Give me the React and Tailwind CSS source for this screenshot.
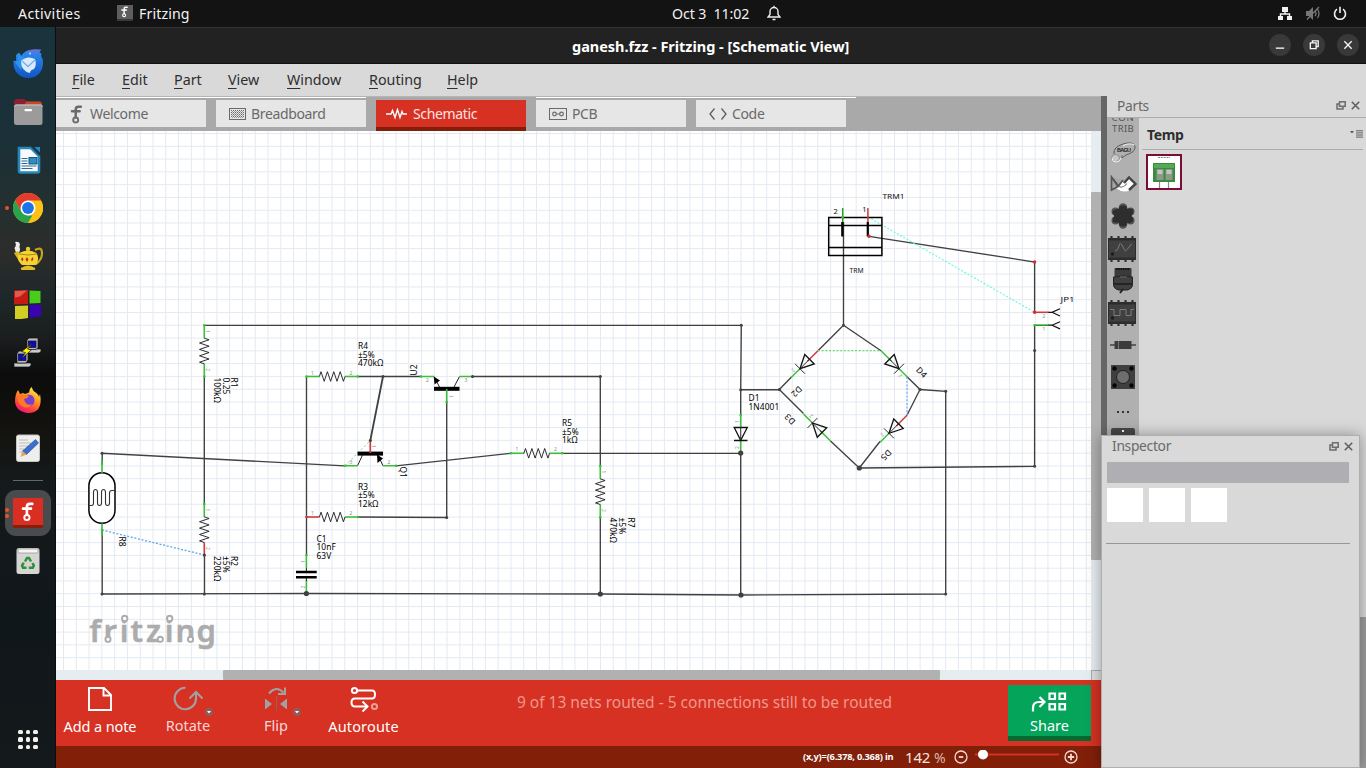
import React from "react";

const WIRE = "#404040";
const GREEN = "#3cbf3c";
const RED = "#cf3a3a";

function DockSlot({ children, dots = 0, active = false }) {
  return (
    <div className="relative flex h-12 w-full shrink-0 items-center justify-center">
      {dots > 0 && (
        <div className="absolute left-[5px] flex flex-col gap-[2px]">
          {Array.from({ length: dots }).map((_, i) => (
            <span key={i} className="block size-1 rounded-full bg-[#e95420]" />
          ))}
        </div>
      )}
      {active ? (
        <div className="flex size-[46px] items-center justify-center rounded-[11px] bg-[#494b4c]">{children}</div>
      ) : (
        children
      )}
    </div>
  );
}

function Ic({ children }) {
  return (
    <svg width="30" height="30" viewBox="0 0 30 30" className="block">
      {children}
    </svg>
  );
}

function FMark({ color = "#fff", x = 0, y = 0, s = 1 }) {
  return (
    <g transform={`translate(${x} ${y}) scale(${s})`} fill="none" stroke={color}>
      <path d="M10 2.2H7.6Q5 2.2 5 5v7.4M1.4 6.6h7.4" strokeWidth="2.4" strokeLinecap="round" />
      <circle cx="5" cy="14.8" r="2.4" strokeWidth="1.8" />
    </g>
  );
}

function Dock() {
  return (
    <aside className="flex w-14 shrink-0 flex-col items-center border-r border-[#0b0e0f] bg-[linear-gradient(180deg,#1a333c_0%,#1b3038_15%,#24302f_25%,#2c2d2b_30%,#1d2729_37%,#1b1d1e_42%,#0c0c0c_47%,#141310_55%,#151a1c_62%,#10171a_80%,#14191b_100%)] pt-[13px]">
      <DockSlot>
        <Ic>
          <defs>
            <linearGradient id="tb" x1="0" y1="0" x2="0" y2="1">
              <stop offset="0" stopColor="#2f8df0" />
              <stop offset="1" stopColor="#1255c4" />
            </linearGradient>
          </defs>
          <path d="M3 6L6 3.500 7.500 8Q10 3 15 1.500L21 .8H28L26.500 3.500 28.500 4.500 28 7Q31.500 12 29 20 25 29 15.500 29C5 29-1 20 .8 11L3 14z" fill="url(#tb)" />
          <path d="M1 12Q5 17 8 21L12 8Q7 8 7 4 4 6 5 12z" fill="#2a93ec" />
          <path d="M12 3.500C15 .5 22-.5 28 .8L24 5Q19 1.500 12 3.500z" fill="#6b6fd8" />
          <circle cx="17" cy="4.500" r=".9" fill="#dbe9ff" />
          <path d="M8 12Q14 6 22 10 24 16 21 20 17 21 17 24 8 22 8 12Z" fill="#d9eafc" />
          <path d="M9 12l6 5.500L22 11" fill="none" stroke="#73aef0" strokeWidth="1.300" />
        </Ic>
      </DockSlot>
      <DockSlot>
        <Ic>
          <path d="M1 5q0-3 3-3h7l3 2.500h12q3 0 3 3v5H1z" fill="#8a1f33" />
          <path d="M13 4.500h13q3 0 3 3v5H10z" fill="#c44a26" />
          <rect x="1" y="7.500" width="28.500" height="20.500" rx="2.500" fill="#9b9b9b" />
          <path d="M1.500 9.500q0-1.500 2-1.500h24q2 0 2 1.500" stroke="#c6c6c6" fill="none" />
          <rect x="11.500" y="12" width="7.500" height="2.200" rx=".8" fill="#fff" />
        </Ic>
      </DockSlot>
      <DockSlot>
        <Ic>
          <path d="M6 3h12l8 8v15q0 1.500-1.500 1.500h-17Q6 27.500 6 26z" fill="#f6fafc" stroke="#2a86b8" strokeWidth="2.600" />
          <path d="M18 2l8.500 9V2z" fill="#163b52" />
          <path d="M21.500 2H27v5.500z" fill="#2689c0" />
          <path d="M8.500 13.500h6M8.500 16h6M8.500 18.500h6M8.500 21h15M8.500 23.500h11" stroke="#2a6d95" />
          <rect x="16" y="12.500" width="8" height="6.500" fill="#2c8cc4" stroke="#1c5473" />
        </Ic>
      </DockSlot>
      <DockSlot dots={1}>
        <Ic>
          <circle cx="15" cy="15" r="15" fill="#fbc116" />
          <path d="M28 7.500H15L8.500 18.700 2 7.500A15 15 0 0 1 28 7.500z" fill="#e33b2e" />
          <path d="M2 7.500L8.500 18.700 15 22.500h6.400L15 30A15 15 0 0 1 2 7.500z" fill="#2ba24c" />
          <path d="M15 30l6.500-11.200L28 7.500A15 15 0 0 1 15 30z" fill="#fbc116" />
          <circle cx="15" cy="15" r="7.500" fill="#fff" />
          <circle cx="15" cy="15" r="5.900" fill="#1a73e8" />
        </Ic>
      </DockSlot>
      <DockSlot>
        <Ic>
          <path d="M2 1q4-1 5 2-1 3 0 5 0 4-3 5Q2 10 1.500 7 4 4 2 1z" fill="#ececec" />
          <path d="M22 9q7-4 7 3t-6 11" fill="none" stroke="#c6a51a" strokeWidth="2.200" />
          <path d="M1 12l4-2 3 6-2 4z" fill="#d9b71e" />
          <path d="M6 12Q15 7 23.500 12 27 18 23 24H9Q3 19 6 12z" fill="#f2d531" />
          <path d="M6 13Q15 15 24 13" stroke="#ab8610" fill="none" />
          <path d="M8 27q7-5 14 0 1 2-2 2H10q-3 0-2-2z" fill="#e4bd22" />
          <circle cx="15" cy="8" r="2.200" fill="#e9c934" />
          <path d="M9 16l1.500 2L9.500 20.500 8 18.500zM14 16l1.500 2.500-1.500 2.500-1.500-2.500zM19.500 16l1 2-1.500 2.500-1-2z" fill="#d02a20" />
        </Ic>
      </DockSlot>
      <DockSlot>
        <Ic>
          <path d="M1 1.500L15 1V15L1 15.500z" fill="#c41c12" />
          <path d="M2 2l12-.5-7 6-5 1z" fill="#e8776d" opacity=".7" />
          <path d="M16.500 1.500L27.500 2V14l-11 .5z" fill="#4ccc1a" />
          <path d="M2 17l13-.5V29L2 31z" fill="#d2ce24" />
          <path d="M16.500 16L28 15.500V27l-11.500 2z" fill="#3903b4" />
        </Ic>
      </DockSlot>
      <DockSlot>
        <Ic>
          <g stroke="#111" strokeWidth=".7">
            <path d="M14 12h14v2.500l-2 1.500H13z" fill="#c9c9c9" />
            <path d="M14 3L16 1H25v9.500l-2 2H14z" fill="#b9b9b9" />
            <rect x="15.500" y="4" width="7.500" height="6.500" fill="#0a0ac8" />
            <path d="M1 26h17v2.500l-2 1.500H1z" fill="#c9c9c9" />
            <path d="M4 16.500L6 14h9v9l-2 3H4z" fill="#b9b9b9" />
            <rect x="5.500" y="17" width="7.500" height="6.500" fill="#0a0ac8" />
            <path d="M20 6l-5.500 6 4 .8L8 22l4.500-6.500-4-1z" fill="#fcf400" />
          </g>
        </Ic>
      </DockSlot>
      <DockSlot>
        <Ic>
          <defs>
            <linearGradient id="ff" x1=".8" y1="0" x2=".3" y2="1">
              <stop offset="0" stopColor="#fff44f" />
              <stop offset=".4" stopColor="#ff9a22" />
              <stop offset=".8" stopColor="#ff3647" />
              <stop offset="1" stopColor="#e31587" />
            </linearGradient>
          </defs>
          <path d="M5 5l2 4 3-1 2 1 4-1.500Q16 4 18.500 2l2 4q5 3 5.500 6l1-3Q29 19 25 24.500 19 29.500 12 27.500 3 25.500 2 17 2 9 5 5z" fill="url(#ff)" />
          <circle cx="15.500" cy="15.500" r="6" fill="#7440d0" />
          <path d="M5 10q4-2 7 0l4 .5q-1 3-5 3.500l1 3q2 4 7 2-4 6-10 2T5 10z" fill="#ff7a24" />
        </Ic>
      </DockSlot>
      <DockSlot>
        <Ic>
          <rect x="3.500" y="2" width="23" height="26.500" rx="2" fill="#eeeeec" stroke="#c4c4c0" />
          <path d="M6 7h9M6 10h12M6 13h9M6 16h5M6 19h4" stroke="#bdbdb8" />
          <path d="M22.500 6.500l3 3.500-12 11.500-4-3.500z" fill="#3a6fd0" stroke="#204a8c" strokeWidth=".6" />
          <path d="M9.500 18l4 3.500L7.500 24z" fill="#e7a15d" />
        </Ic>
      </DockSlot>
      <div className="flex h-[17px] items-center">
        <div className="h-px w-[30px] bg-[#63686a]" />
      </div>
      <DockSlot dots={2} active>
        <Ic>
          <rect width="30" height="30" fill="#d92f22" />
          <rect y="27" width="30" height="3" fill="#861e0c" />
          <FMark x={8.500} y={3.500} s={1.080} />
        </Ic>
      </DockSlot>
      <DockSlot>
        <Ic>
          <rect x="3.500" y="2" width="23" height="26" rx="2.500" fill="#d5d5d3" />
          <rect x="5" y="3" width="20" height="4" rx="1" fill="#f6f6f6" stroke="#8c8c8c" strokeWidth=".7" />
          <g fill="none" stroke="#2e9235" strokeWidth="2.500">
            <path d="M12 15.500l2-3.500h2l2 3.500" />
            <path d="M19.500 17l1.300 2.500-1 2.200h-4" />
            <path d="M13.500 21.700h-3.500L9 19.500l1.800-2.800" />
          </g>
        </Ic>
      </DockSlot>
      <div className="mt-auto mb-[19px] ml-px grid grid-cols-3 gap-[3px]">
        {Array.from({ length: 9 }).map((_, i) => (
          <span key={i} className="size-[4.500px] rounded-[1.500px] bg-[#f0f0ec]" />
        ))}
      </div>
    </aside>
  );
}

const zigH = (x, y) => `M${x} ${y}l1.600-4.800 3.200 9.600 3.200-9.600 3.200 9.600 3.200-9.600 3.200 9.600 3.200-9.600 3.200 9.600 1.600-4.800`;

function Resistor({ x, y, vertical, a = GREEN, b = GREEN }) {
  return (
    <g transform={`translate(${x} ${y})${vertical ? " rotate(90)" : ""}`}>
      <path d="M0 0H13" stroke={a} strokeWidth="1.600" />
      <path d="M38.500 0H51.200" stroke={b} strokeWidth="1.600" />
      <path d={zigH(12.900, 0)} fill="none" stroke="#1a1a1a" strokeWidth=".9" />
      <circle cx="0" cy="0" r="1.300" fill={a} />
      <circle cx="51.200" cy="0" r="1.300" fill={b} />
      <text x="4.500" y="-2" fontSize="5" fill="#8c8c8c">1</text>
      <text x="43" y="-2" fontSize="5" fill="#8c8c8c">2</text>
    </g>
  );
}

function Label({ x, y, lines, rot = 0 }) {
  return (
    <g transform={`translate(${x} ${y}) rotate(${rot})`} fill="#000" fontSize="8.400" letterSpacing="0.08">
      {lines.map((t, i) => (
        <text key={t} x="0" y={i * 8.700}>
          {t}
        </text>
      ))}
    </g>
  );
}

function Dots({ pts, r = 1.500, fill = WIRE }) {
  return pts.map(([x, y]) => <circle key={`${x}-${y}`} cx={x} cy={y} r={r} fill={fill} />);
}

function Diode({ x1, y1, rot, first = GREEN }) {
  return (
    <g transform={`translate(${x1} ${y1}) rotate(${rot})`}>
      <path d="M0 0H15" stroke={first} strokeWidth="1.500" />
      <path d="M25.500 0H38" stroke={GREEN} strokeWidth="1.500" />
      <path d="M12 -6.700V6.700L25.500 0Z" fill="none" stroke="#111" strokeWidth="1.300" />
      <path d="M25.500 -7V7M12 0H25.500" stroke="#222" strokeWidth=".9" />
      <text x="30" y="5.500" fontSize="5" fill="#8c8c8c">2</text>
    </g>
  );
}

function Schematic() {
  return (
    <svg width="1035" height="539" viewBox="56 131 1035 539" className="block" fontFamily="'Noto Sans', sans-serif">
      <defs>
        <pattern id="grid" x="63" y="133" width="12.785" height="12.785" patternUnits="userSpaceOnUse">
          <path d="M0 .5H12.785M.5 0V12.785" stroke="#e4e9f1" strokeWidth="1" />
        </pattern>
      </defs>
      <rect x="56" y="131" width="1035" height="539" fill="#fff" />
      <rect x="56" y="131" width="1035" height="539" fill="url(#grid)" />

      <text x="89.500 103.500 119.800 130.500 146 164.800 175.500 196.500" y="641.700" fontSize="31" fontWeight="600" fill="#acacac" stroke="#acacac" strokeWidth=".5">
        fritzing
      </text>
      <g fill="#fff" stroke="#acacac" strokeWidth="1.900">
        <circle cx="124.700" cy="618.500" r="2.700" />
        <circle cx="169.700" cy="618.500" r="2.700" />
        <circle cx="108" cy="639.300" r="2.600" />
        <circle cx="160.300" cy="639.300" r="2.600" />
        <circle cx="190.500" cy="639.300" r="2.600" />
      </g>

      <g fill="none" stroke={WIRE} strokeWidth="1.350">
        <path d="M204.300 325.300H741.300L740.700 389.700H779.500" />
        <path d="M204.300 376.500V504M204.500 555V594" />
        <path d="M102.200 465V453.300L345 465.800" />
        <path d="M102.200 530V594L306.500 593.500 600.300 594 741 595 945.700 594V391.300L920 389.500" />
        <path d="M306.500 376.500V555M358 376.500H421M472.500 376.500H600.300V466M600.300 517V594" />
        <path d="M446.700 402V517.500L358 517M396 465.800L511 453.300M562 453.300H740.700" />
        <path d="M740.700 389.700V415M740.700 453V595" />
        <path d="M383 376.500L370.300 440.500" strokeWidth="1.800" />
        <path d="M843.500 222V325.300L818 350.700M843.500 325.300L881 350.700M907 376.800L920 389.500 907 415.300M880 441.500L859.300 468 830.500 441M791.500 377L779.300 389.500 803.500 413.500" />
        <path d="M859.300 468L1034.600 466.300V325.300M869 236.300L1034.600 262V312.300" />
      </g>

      <g fill="none" strokeWidth="1.200">
        <path d="M102 530L204.300 555" stroke="#5aa4ee" strokeDasharray="2 1.700" strokeWidth="1.300" />
        <path d="M345 465.800L370.300 440.500" stroke="#5ccf5c" strokeDasharray="2 2.500" strokeWidth=".9" />
        <path d="M818 350.700H881" stroke="#6fdf6f" strokeDasharray="2 1.700" />
        <path d="M907 377V415" stroke="#7fb8f8" strokeDasharray="2 1.700" strokeWidth="1.500" />
        <path d="M868 217L1034.600 312.300" stroke="#6df8dd" strokeDasharray="2 1.700" />
      </g>

      <Resistor x={204.300} y={325.300} vertical />
      <Resistor x={204.300} y={504} vertical b={RED} />
      <Resistor x={306.500} y={376.500} />
      <Resistor x={306.500} y={517} a={RED} />
      <Resistor x={511} y={453.300} />
      <Resistor x={600.300} y={466} vertical />

      {/* photoresistor */}
      <rect x="88.900" y="472.800" width="26.100" height="50.500" rx="13" fill="#fff" stroke="#000" strokeWidth="1.500" />
      <path d="M89 505.500H91.500Q93.500 505.500 93.500 503V492.500Q93.500 489.500 95.500 489.500T97.500 492.500V503Q97.500 505.500 99.500 505.500T101.500 503V492.500Q101.500 489.500 103.500 489.500T105.500 492.500V503Q105.500 505.500 107.500 505.500T109.500 503V493Q109.500 490.500 112 490.500H115" fill="none" stroke="#333" strokeWidth="1.100" />
      <path d="M102 460V473M102 523.500V536" stroke={GREEN} strokeWidth="1.600" />

      {/* transistors */}
      <g>
        <rect x="434" y="386.800" width="25.500" height="4" fill="#000" />
        <path d="M434 376.500L439.500 387M459.500 376.500L454 387" stroke="#222" />
        <path d="M433.700 376.500L440 380.500 434.500 384.500Z" fill="#000" />
        <path d="M421 376.500H434M460 376.500H472.500M446.700 389V402" stroke={GREEN} strokeWidth="1.600" />
        <rect x="357.500" y="451.600" width="25.500" height="4" fill="#000" />
        <path d="M357.500 465.800L362.500 455M383 465.800L378 455" stroke="#222" />
        <path d="M377 454.500L383 458.500 377.500 463Z" fill="#000" />
        <path d="M345 465.800H357.500M383 465.800H396" stroke={GREEN} strokeWidth="1.600" />
        <path d="M370.300 440.500V453" stroke={RED} strokeWidth="1.700" />
      </g>

      {/* capacitor */}
      <path d="M306.400 555V568M306.400 580V593" stroke={GREEN} strokeWidth="1.600" />
      <path d="M306.400 568V571M306.400 578V581" stroke="#222" />
      <path d="M296 572H316.700M296 577.200H316.700" stroke="#000" strokeWidth="2.400" />

      {/* diodes */}
      <g>
        <path d="M740.700 415V427.500M740.700 440.500V453" stroke={GREEN} strokeWidth="1.600" />
        <path d="M734.200 427.500H747.300L740.700 440.300ZM734 440.500H747.500" fill="none" stroke="#111" strokeWidth="1.300" />
        <path d="M740.700 427V440" stroke="#333" />
      </g>
      <Diode x1={818} y1={350.700} rot={135} first={RED} />
      <Diode x1={881} y1={350.700} rot={45} />
      <Diode x1={830.500} y1={441} rot={225} />
      <Diode x1={907} y1={415.300} rot={135} first={RED} />

      {/* screw terminal */}
      <g fill="none" stroke="#000" strokeWidth="1.500">
        <rect x="828.700" y="217.500" width="53.200" height="38" />
        <path d="M828.700 225.500H882M828.700 247.500H882" />
        <path d="M842.300 222V236.500M867.800 222V236.500" strokeWidth="2.200" />
        <path d="M842.700 208V222" stroke="#22a022" />
        <path d="M867.900 208V222" stroke={RED} />
      </g>

      {/* header */}
      <g fill="none" stroke="#111" strokeWidth="1.200">
        <path d="M1048 312.300H1052L1060 308.700M1052 312.300L1060 316M1048 325.200H1052L1060 321.700M1052 325.200L1060 328.900" />
        <path d="M1034.600 312.300H1048.500" stroke={RED} strokeWidth="1.600" />
        <path d="M1034.600 325.200H1048.500" stroke="#22a022" strokeWidth="1.600" />
      </g>

      <Dots pts={[[102, 453.300], [102, 594], [204.300, 594], [383, 376.500], [472.500, 376.500], [370.300, 440.500], [741.300, 325.300], [600.300, 376.500], [446.700, 517.500], [843.500, 325.300], [779.300, 389.500], [740.700, 389.700], [920, 389.500], [945.700, 391.300], [945.700, 594], [1034.600, 350.500], [1034.600, 466.300], [204.300, 555]]} r={1.500} />
      <Dots pts={[[306.400, 593.500], [600.300, 594], [741, 595], [859.300, 468], [740.700, 453]]} r={2.600} />
      <Dots pts={[[869, 236.300], [1034.600, 262], [1034.600, 312.300]]} r={1.700} fill="#e02828" />
      <Dots pts={[[345, 465.800], [396, 465.800], [421, 376.500], [446.700, 402], [842.700, 217], [1034.600, 325.200], [102, 530], [306.400, 555], [740.700, 415]]} r={1.300} fill={GREEN} />

      <Label x={358} y={349} lines={["R4", "±5%", "470kΩ"]} />
      <Label x={358} y={489.500} lines={["R3", "±5%", "12kΩ"]} />
      <Label x={316.500} y={541.500} lines={["C1", "10nF", "63V"]} />
      <Label x={562} y={426} lines={["R5", "±5%", "1kΩ"]} />
      <Label x={748.500} y={401} lines={["D1", "1N4001"]} />
      <Label x={231.300} y={377.500} rot={90} lines={["R1", "0.25", "100kΩ"]} />
      <Label x={231.300} y={556} rot={90} lines={["R2", "±5%", "220kΩ"]} />
      <Label x={627.500} y={517.500} rot={90} lines={["R7", "±5%", "470kΩ"]} />
      <Label x={118.800} y={536.500} rot={90} lines={["R8"]} />
      <Label x={399.800} y={466.500} rot={90} lines={["Q1"]} />
      <Label x={417.300} y={375.500} rot={-90} lines={["U2"]} />
      <Label x={798.500} y={385.500} rot={135} lines={["D2"]} />
      <Label x={888} y={449} rot={135} lines={["D5"]} />
      <Label x={796} y={421} rot={225} lines={["D3"]} />
      <Label x={915.500} y={370.500} rot={45} lines={["D4"]} />

      <g fill="#111" fontSize="7.500">
        <text x="882.500" y="199" textLength="22" lengthAdjust="spacingAndGlyphs">TRM1</text>
        <text x="849.500" y="273" fontSize="6.800" textLength="14" lengthAdjust="spacingAndGlyphs">TRM</text>
        <text x="1060.500" y="302" textLength="14" lengthAdjust="spacingAndGlyphs">JP1</text>
        <text x="833.500" y="213.500">2</text>
        <text x="862.300" y="212">1</text>
      </g>
      <g fill="#8c8c8c" fontSize="5">
        <text x="426" y="382">2</text>
        <text x="464.500" y="382">3</text>
        <text x="349.500" y="464">3</text>
        <text x="387.500" y="464">2</text>
        <text x="1042.500" y="318">2</text>
        <text x="1042.500" y="331">1</text>
        <text transform="translate(448.500 395) rotate(90)">1</text>
        <text transform="translate(372 445) rotate(90)">1</text>
        <text transform="translate(304.500 563) rotate(-90)">1</text>
        <text transform="translate(304.500 588.500) rotate(-90)">2</text>
        <text transform="translate(739 423) rotate(-90)">1</text>
        <text transform="translate(739 449) rotate(-90)">2</text>
      </g>
    </svg>
  );
}

const MENUS = [
  ["File", "w-[50px]"],
  ["Edit", "w-[52px]"],
  ["Part", "w-[54px]"],
  ["View", "w-[59px]"],
  ["Window", "w-[82px]"],
  ["Routing", "w-[78px]"],
  ["Help", "w-[50px]"],
];

function Tab({ label, icon, active }) {
  return (
    <div className={active ? "flex h-[34px] w-[150px] flex-col pt-[3px]" : "flex h-[34px] w-[150px] flex-col border-t border-white pt-[2px]"}>
      <div className={active ? "flex h-[27px] items-center gap-[5px] bg-[#d63123] pl-[9px] text-[#fbe4e0]" : "flex h-[27px] items-center gap-[5px] bg-[#e6e6e6] pl-[13px] text-[#6a6a6a]"}>
        {icon}
        <span className="text-[14px] leading-none tracking-[-0.35px]">{label}</span>
      </div>
      {active && <div className="h-1 bg-[#811f09]" />}
    </div>
  );
}

function TabGap() {
  return <div className="h-px w-[10px] bg-white" />;
}

function Tabs() {
  return (
    <div className="flex h-[34px] bg-[#a9a9a9]">
      <Tab
        label="Welcome"
        icon={
          <svg width="16" height="20" viewBox="0 0 16 20">
            <FMark x={1.500} y={0.500} color="#6a6a6a" s={1.040} />
          </svg>
        }
      />
      <TabGap />
      <Tab
        label="Breadboard"
        icon={
          <svg width="17" height="12" viewBox="0 0 17 12" fill="none" stroke="#6a6a6a" shapeRendering="crispEdges">
            <rect x=".5" y=".5" width="16" height="11" />
            <path d="M2 2.500h13M2 4.500h13M2 6.500h13M2 8.500h13" strokeDasharray="1 1" strokeWidth="1" />
            <path d="M3 3.500h11M3 5.500h11M3 7.500h11M3 9.500h11" stroke="#9a9a9a" strokeDasharray="1 1" strokeWidth="1" />
          </svg>
        }
      />
      <div className="w-[10px]" />
      <Tab
        active
        label="Schematic"
        icon={
          <svg width="23" height="12" viewBox="0 0 23 12" fill="none" stroke="#fff" strokeWidth="1.400">
            <path d="M1 6h5l1.500-3.500 2.500 7 2.500-8 2.500 8 2-6L18 6h4" />
          </svg>
        }
      />
      <div className="w-[10px]" />
      <Tab
        label="PCB"
        icon={
          <svg width="18" height="12" viewBox="0 0 18 12" fill="none" stroke="#6a6a6a">
            <rect x=".5" y=".5" width="17" height="11" />
            <circle cx="5.500" cy="6" r="1.800" strokeWidth="1.200" />
            <circle cx="12.500" cy="6" r="1.800" strokeWidth="1.200" />
            <path d="M7.300 6h3.400" />
          </svg>
        }
      />
      <TabGap />
      <Tab
        label="Code"
        icon={
          <svg width="18" height="14" viewBox="0 0 18 14" fill="none" stroke="#5e5e5e" strokeWidth="1.300">
            <path d="M5.500 1.500L1 7l4.500 5.500M12.500 1.500L17 7l-4.500 5.500" />
          </svg>
        }
      />
      <TabGap />
    </div>
  );
}

function Caret() {
  return (
    <svg width="8" height="8" viewBox="0 0 8 8" className="absolute right-0 bottom-0">
      <circle cx="4" cy="4" r="4" fill="#8f5b5b" />
      <path d="M2 3h4L4 5.500z" fill="#fff" />
    </svg>
  );
}

function Toolbar() {
  return (
    <div className="flex h-[66px] bg-[#d63123] font-['Noto_Sans',sans-serif] text-[14.500px] text-white">
      <div className="flex w-[88px] flex-col items-center pt-[6px]">
        <svg width="26" height="26" viewBox="0 0 26 26" fill="none" stroke="#fff" strokeWidth="1.900">
          <path d="M2 2H17L24 9V24H2ZM16.500 2V9.500H24" />
        </svg>
        <span className="mt-[5px] leading-[18px] tracking-[-0.1px]">Add a note</span>
      </div>
      <div className="flex w-[88px] flex-col items-center pt-[5px] text-[#f7d5d9]">
        <div className="relative flex h-[31px] w-[50px] justify-center pt-[1px]">
          <svg width="30" height="26" viewBox="0 0 30 26" fill="none" stroke="#a1a1a1" strokeWidth="2.100" className="mr-px">
            <path d="M12.500 1.800A10.700 10.700 0 1 0 23 12V6" />
            <path d="M16.500 12.500L23 6l6.500 6.500" />
          </svg>
          <Caret />
        </div>
        <span className="leading-[18px]">Rotate</span>
      </div>
      <div className="flex w-[88px] flex-col items-center pt-[5px] text-[#f7d5d9]">
        <div className="relative flex h-[31px] w-[50px] justify-center pt-[1px]">
          <svg width="24" height="26" viewBox="0 0 24 26" fill="none" stroke="#a1a1a1" strokeWidth="2">
            <path d="M5 7.500Q12-1 19.500 6.500M21 1.500V8h-7" />
            <path d="M1 12.500L8 18 1 23.500ZM23 12.500L16 18 23 23.500Z" fill="#a1a1a1" stroke="none" />
            <path d="M12.500 10V25" stroke="#a05a55" strokeWidth="1.200" />
          </svg>
          <Caret />
        </div>
        <span className="leading-[18px]">Flip</span>
      </div>
      <div className="flex w-[88px] flex-col items-center pt-[6px] pr-px">
        <svg width="28" height="26" viewBox="0 0 28 26" fill="none" stroke="#fff" strokeWidth="2">
          <circle cx="4.500" cy="4.500" r="2.600" />
          <path d="M7.200 4.500H22q3 0 3 4t-3 4H5q-3.500 0-3.500 4T5 20.500H16.500M12.500 15.500l5 5-5 5" />
          <circle cx="24.500" cy="20.500" r="2.600" stroke="#f0a090" />
        </svg>
        <span className="mt-[5px] leading-[18px] tracking-[0.15px]">Autoroute</span>
      </div>
      <div className="flex flex-1 justify-center pt-[13px] pr-[7px] text-[#f0988a]">
        <span className="text-[15.500px] leading-[18px] whitespace-nowrap">9 of 13 nets routed - 5 connections still to be routed</span>
      </div>
      <div className="mt-[5px] mr-[10px] flex h-[56px] w-[83px] flex-col items-center border-b-[5px] border-[#06692f] bg-[#05a45b] pt-[7px]">
        <svg width="36" height="20" viewBox="0 0 36 20" fill="none" stroke="#fff" strokeWidth="2.200" className="mr-[1px]">
          <path d="M2 19.500V16q0-6 6-6h5M8.500 5l5 5-5 5" />
          <path d="M18.500 1.500h5.500V7h-5.500zM28.500 1.500H34V7h-5.500zM18.500 12h5.500v5.500h-5.500zM28.500 12H34v5.500h-5.500z" />
        </svg>
        <span className="mt-[4px] leading-[18px]">Share</span>
      </div>
    </div>
  );
}

function StatusBar() {
  return (
    <div className="flex h-[22px] items-center bg-[#811f09] text-white">
      <span className="ml-[747px] w-[102px] text-[9.300px] font-bold tracking-[-0.22px] whitespace-nowrap">(x,y)=(6.378, 0.368) in</span>
      <span className="w-[29px] text-[15px] tracking-[-0.2px] text-[#f5e4dd]">142</span>
      <span className="w-5 text-[14px] text-[#dcb6a6]">%</span>
      <svg width="14" height="14" viewBox="0 0 14 14" fill="none" stroke="#f3dcd5" strokeWidth="1.300">
        <circle cx="7" cy="7" r="6" />
        <path d="M4.800 7h4.400" strokeWidth="1.800" />
      </svg>
      <div className="ml-[7px] flex h-[11px] w-[84px] items-center pb-[4px]">
        <svg width="84" height="11" viewBox="0 0 84 11" className="block shrink-0">
          <path d="M0 4.500H84" stroke="#d63123" strokeWidth="2" />
          <circle cx="8" cy="4.500" r="5" fill="#fff" />
        </svg>
      </div>
      <svg width="14" height="14" viewBox="0 0 14 14" fill="none" stroke="#f3dcd5" strokeWidth="1.300" className="ml-[5px]">
        <circle cx="7" cy="7" r="6" />
        <path d="M3.800 7h6.400M7 3.800v6.400" strokeWidth="1.800" />
      </svg>
    </div>
  );
}

function PanelButtons() {
  return (
    <div className="flex items-center gap-[5px]">
      <svg width="10" height="9" viewBox="0 0 10 9" fill="none" stroke="#6b6b6b" strokeWidth="1.500">
        <rect x="3.500" y=".8" width="5.700" height="4.500" />
        <path d="M3 3H1v5h6V6" />
      </svg>
      <svg width="9" height="9" viewBox="0 0 9 9" fill="none" stroke="#606060" strokeWidth="1.600">
        <path d="M.8 .8l7.400 7.400M8.200 .8L.8 8.200" />
      </svg>
    </div>
  );
}

function Chip({ wave }) {
  return (
    <svg width="28" height="26" viewBox="0 0 28 26" className="mr-[2px]">
      <path d="M3.500 0v26M10.500 0v26M17.500 0v26M24.500 0v26" stroke="#333" strokeWidth="2.200" />
      <rect x="0" y="2" width="28" height="22" fill="#2c2c2c" />
      <rect x="1" y="4.500" width="26" height="17" fill="#404040" />
      <path d={wave} fill="none" stroke="#7c7c7c" strokeWidth="1" />
      <circle cx="4.500" cy="18" r="1.700" fill="#1c1c1c" />
    </svg>
  );
}

function Bin({ children }) {
  return <div className="flex h-[32.200px] shrink-0 items-center justify-center">{children}</div>;
}

function BinColumn() {
  return (
    <div className="flex w-8 shrink-0 flex-col overflow-hidden bg-[#b0b0b0]">
      <div className="flex h-[18px] shrink-0 flex-col items-center justify-end overflow-hidden font-['Noto_Sans',sans-serif] text-[9.500px] leading-[11px] text-[#555]">
        <span className="tracking-[0.8px]">CON</span>
        <span className="mb-[2px] tracking-[0.3px]">TRIB</span>
      </div>
      <Bin>
        <svg width="28" height="22" viewBox="0 0 28 22" fill="none" stroke="#5c5c5c">
          <path d="M5 13Q4 6 14 3T26 5Q27 11 17 14L13 17V14.500" />
          <path d="M14 4.500Q21 1.500 25.500 4" stroke="#f0f0f0" />
          <ellipse cx="6.500" cy="17" rx="4" ry="3.500" fill="#c8c8c8" stroke="#777" strokeWidth=".7" />
          <path d="M3 17q0 4 4 4t5-4" stroke="#f2f2f2" />
          <text x="8" y="10.500" fontSize="5.500" fontWeight="bold" fill="#222" stroke="none" fontFamily="Liberation Sans" textLength="14">BAGU</text>
        </svg>
      </Bin>
      <Bin>
        <svg width="28" height="18" viewBox="0 0 28 18">
          <path d="M8 5l8 3 4-5 6 6-5 6q-7 4-14-2z" fill="#fff" />
          <path d="M2.500 2v13L9 11.500zM2.500 2l7 9 4.500-6" fill="#a8a8a8" stroke="#555" strokeWidth="1.700" />
          <path d="M15 8l5-5.500L26.500 9 20 15" fill="none" stroke="#444" strokeWidth="2.400" />
          <path d="M10 11.500q4 2 8-3" fill="none" stroke="#888" strokeWidth="1.200" />
        </svg>
      </Bin>
      <Bin>
        <svg width="26" height="28" viewBox="0 0 26 28">
          <g fill="#555">
            <circle cx="13" cy="5.500" r="4.200" />
            <circle cx="13" cy="22.500" r="4.200" />
            <circle cx="5.500" cy="9.500" r="4" />
            <circle cx="20.500" cy="9.500" r="4" />
            <circle cx="5.500" cy="18.500" r="4" />
            <circle cx="20.500" cy="18.500" r="4" />
          </g>
          <path d="M9.500 4.500q3.500-2.500 7 0l1 2.500q4-1.500 6 1.500 0 3-2 5.500 3 3 1 6-3 1.500-5 .5L16.500 23.500q-3.500 2-7 0l-1-3Q5 21 3 20q-1-3.500 1.500-6-3-3-1.500-5.500 3-2 5.500-1.500z" fill="#2e2e2e" />
        </svg>
      </Bin>
      <Bin>
        <Chip wave="M7 15q3 0 4-5t3.500 0 3 5 6-7" />
      </Bin>
      <Bin>
        <svg width="22" height="27" viewBox="0 0 22 27">
          <rect x="2.500" y="1" width="17" height="11" rx="1" fill="#3a3a3a" />
          <path d="M4 2h14" stroke="#111" strokeWidth="2" strokeDasharray="1.500 .8" />
          <path d="M1.500 10q9.500-2 19 0v7.500q0 4-5 5.500h-9q-5-1.500-5-5.500z" fill="#3f3f3f" stroke="#222" />
          <path d="M2 17h18" stroke="#1d1d1d" strokeWidth="1.500" />
          <path d="M8 10h7" stroke="#6a6a6a" />
          <path d="M11 22l-3 4" stroke="#222" strokeWidth="2" />
        </svg>
      </Bin>
      <Bin>
        <Chip wave="M2 9.500h4v6h6v-6h6v6h5v-6h3" />
      </Bin>
      <Bin>
        <svg width="26" height="8" viewBox="0 0 26 8">
          <path d="M0 4h26" stroke="#4a4a4a" strokeWidth="1.600" />
          <rect x="4.500" y="0" width="17" height="8" fill="#3c3c3c" />
          <path d="M8.500 0v8" stroke="#777" />
        </svg>
      </Bin>
      <Bin>
        <svg width="24" height="24" viewBox="0 0 24 24">
          <rect width="24" height="24" fill="#3f3f3f" />
          <circle cx="12" cy="12" r="6.500" fill="#6e6e6e" stroke="#222" />
          <g fill="#050505">
            <circle cx="3.500" cy="3.500" r="2.200" />
            <circle cx="20.500" cy="3.500" r="2.200" />
            <circle cx="3.500" cy="20.500" r="2.200" />
            <circle cx="20.500" cy="20.500" r="2.200" />
          </g>
        </svg>
      </Bin>
      <Bin>
        <div className="mt-[5px] flex gap-[3px]">
          <span className="size-[2px] bg-[#333]" />
          <span className="size-[2px] bg-[#333]" />
          <span className="size-[2px] bg-[#333]" />
        </div>
      </Bin>
      <div className="mx-1 mt-[2px] h-5 shrink-0 rounded-t-[2px] bg-[#484848] pt-[2px]">
        <div className="mx-auto size-[2px] bg-white" />
      </div>
    </div>
  );
}

function PartsPanel() {
  return (
    <div className="flex w-[265px] shrink-0 border-l-[6px] border-[#666] bg-[#d9d9d9]">
      <div className="flex flex-1 flex-col">
        <div className="flex h-[22px] shrink-0 items-center justify-between border-b border-[#adadad] pr-[6px] pb-[2px] pl-[10px]">
          <span className="text-[13.800px] leading-none tracking-[-0.3px] text-[#6a6a6a]">Parts</span>
          <PanelButtons />
        </div>
        <div className="flex min-h-0 flex-1">
          <BinColumn />
          <div className="flex-1 pl-[3px]">
            <div className="mr-[3px] flex h-[32px] items-center justify-between border-b border-[#adadad] pl-[5px]">
              <span className="pt-[2px] text-[14px] leading-none font-bold tracking-[-0.35px] text-[#2e2e2e]">Temp</span>
              <svg width="13" height="8" viewBox="0 0 13 8" className="block">
                <path d="M0 1h4L2 3.500z" fill="#555" />
                <path d="M6 .8h7M6 2.900h7M6 5h7M6 7.100h7" stroke="#5e5e5e" />
              </svg>
            </div>
            <div className="mt-[4px] ml-[4px] size-[36px] border-2 border-[#7b0c35] bg-white">
              <svg width="32" height="32" viewBox="0 0 32 32">
                <path d="M10 1.500h12" stroke="#888" strokeDasharray="2 .8" />
                <path d="M11.500 24v8M20.500 24v8" stroke="#8a8a8a" strokeWidth="1.200" />
                <rect x="5" y="7" width="22" height="19" fill="#3b8a3e" />
                <rect x="6" y="8" width="20" height="4" fill="#54a856" />
                <rect x="8.500" y="13" width="7" height="11" fill="#8c9a8c" />
                <rect x="17.500" y="13" width="7" height="11" fill="#8c9a8c" />
                <rect x="9.500" y="14" width="5" height="4" fill="#c4c4c4" />
                <rect x="18.500" y="14" width="5" height="4" fill="#c4c4c4" />
              </svg>
            </div>
          </div>
        </div>
      </div>
    </div>
  );
}

function Inspector() {
  return (
    <div className="absolute top-[435px] left-[1101px] flex h-[333px] w-[259px] flex-col border border-[#aeaeae] bg-[#d9d9d9] shadow-[0_0_14px_rgba(0,0,0,0.35)]">
      <div className="flex h-[22px] shrink-0 items-center justify-between pr-[6px] pb-[2px] pl-[10px]">
        <span className="text-[13.800px] leading-none tracking-[-0.3px] text-[#6a6a6a]">Inspector</span>
        <PanelButtons />
      </div>
      <div className="mt-[4px] ml-[5px] h-[21px] w-[242px] bg-[#aeaeb3]" />
      <div className="mt-[5px] ml-[5px] flex gap-[6px]">
        <div className="h-[34px] w-[36px] bg-white" />
        <div className="h-[34px] w-[36px] bg-white" />
        <div className="h-[34px] w-[36px] bg-white" />
      </div>
      <div className="mt-[21px] ml-[4px] h-px w-[244px] bg-[#989898]" />
    </div>
  );
}

export default function App() {
  return (
    <div className="relative flex h-[768px] w-[1366px] flex-col overflow-hidden bg-[#131313] font-['Noto_Sans',sans-serif]">
      <header className="flex h-[27px] shrink-0 items-center text-[14.200px] text-[#f2f2f2]">
        <span className="ml-[18px] w-[99px] tracking-[0.35px]">Activities</span>
        <svg width="16" height="16" viewBox="0 0 16 16" className="-mt-[2px]">
          <rect width="16" height="16" fill="#5e5e5e" />
          <rect y="14" width="16" height="2" fill="#3a3a3a" />
          <FMark x={4} y={1} s={0.620} />
        </svg>
        <span className="ml-[6px] w-[533px] tracking-[0.1px]">Fritzing</span>
        <span className="w-[95px] tracking-[-0.1px] whitespace-pre">Oct 3  11:02</span>
        <svg width="14" height="16" viewBox="0 0 14 16" fill="none" stroke="#eee" strokeWidth="1.400" className="-mt-px">
          <path d="M1 12h12l-2-2.500V6.500a4 4 0 0 0-8 0V9.500zM5.500 14.500h3M7 .8v1.500" />
        </svg>
        <div className="ml-auto flex items-center gap-[12px] pr-[19px] pb-px">
          <svg width="16" height="15" viewBox="0 0 16 15" fill="#f2f2f2">
            <path d="M5 1h6v5H5zM1 10h5v4H1zM10 10h5v4h-5z" />
            <path d="M8 5v3M3.500 11V8h9v3" fill="none" stroke="#f2f2f2" strokeWidth="1.400" />
          </svg>
          <svg width="16" height="15" viewBox="0 0 16 15" fill="#777">
            <path d="M1 5h3l4-4v13l-4-4H1z" />
            <path d="M10 5q2 2.500 0 5M12.500 3q3 4.500 0 9M2 13.500L14 1" fill="none" stroke="#777" strokeWidth="1.300" />
          </svg>
          <svg width="14" height="15" viewBox="0 0 14 15" fill="none" stroke="#f2f2f2" strokeWidth="1.600">
            <path d="M4 3.200a5.500 5.500 0 1 0 6 0M7 .8V7" />
          </svg>
        </div>
      </header>
      <div className="flex min-h-0 flex-1">
        <Dock />
        <div className="flex min-w-0 flex-1 flex-col">
          <div className="flex h-[37px] shrink-0 items-center border-t border-b border-t-[#333] border-b-[#111] bg-[#222]">
            <span className="ml-[516px] pt-[2px] text-[14.500px] leading-none font-bold tracking-[-0.03px] whitespace-nowrap text-white">ganesh.fzz - Fritzing - [Schematic View]</span>
            <div className="-mt-px ml-auto flex gap-3 pr-[7px]">
              {["M6.500 13.500h8", "M7 8.500h5.500V14H7zM9 8.500V6.500h5.500V12H12.500", "M7 7l7 7M14 7l-7 7"].map((d) => (
                <svg key={d} width="22" height="22" viewBox="0 0 21 21" fill="none">
                  <circle cx="10.500" cy="10.500" r="10.500" fill="#393939" />
                  <path d={d} stroke="#f4f4f4" strokeWidth="1.300" />
                </svg>
              ))}
            </div>
          </div>
          <nav className="flex h-[32px] shrink-0 items-center bg-[#d9d9d9] pl-4 text-[14.300px] text-[#2e2e2e]">
            {MENUS.map(([m, w]) => (
              <span key={m} className={w}>
                <span className="underline decoration-1 underline-offset-[3px]">{m[0]}</span>
                {m.slice(1)}
              </span>
            ))}
          </nav>
          <div className="flex min-h-0 flex-1">
            <div className="flex w-[1045px] shrink-0 flex-col">
              <div className="h-px bg-[#b5b5b5]" />
              <Tabs />
              <div className="flex h-[539px]">
                <Schematic />
                <div className="w-[10px] bg-[#e6edf1] pt-[61px]">
                  <div className="h-[368px] rounded-[1px] bg-[#b1b1b1]" />
                </div>
              </div>
              <div className="flex h-[10px] bg-[#e6edf1]">
                <div className="ml-[167px] h-full w-[717px] rounded-[1px] bg-[#b1b1b1]" />
                <div className="ml-auto w-[10px] border-t border-l border-[#aaa] bg-[#dedede]" />
              </div>
              <Toolbar />
              <StatusBar />
            </div>
            <PartsPanel />
          </div>
        </div>
      </div>
      <div className="absolute top-[617px] right-0 h-[151px] w-[6px] bg-[#9c9c9c]" />
      <Inspector />
    </div>
  );
}
